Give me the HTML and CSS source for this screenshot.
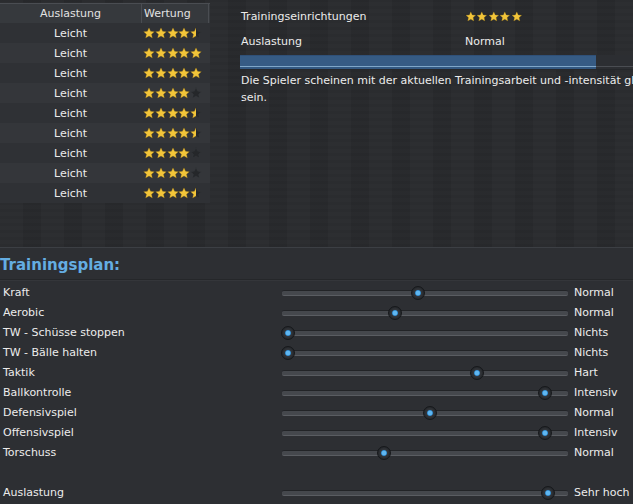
FILE: index.html
```html
<!DOCTYPE html>
<html lang="de">
<head>
    <meta charset="UTF-8">
    <title>Training</title>
    <link rel="stylesheet" href="styles.css">
</head>
<body>
    <svg class="defs" width="0" height="0">
        <defs>
            <symbol id="star" viewBox="0 0 24 24">
                <path d="M12 1.5l3.2 7 7.5.8-5.6 5.1 1.6 7.5L12 18l-6.7 3.9 1.6-7.5-5.6-5.1 7.5-.8z"/>
            </symbol>
            <clipPath id="half"><rect x="0" y="0" width="6" height="12"/></clipPath>
        </defs>
    </svg>

    <div class="top">
        <div class="ratings">
            <div class="row head">
                <div class="col-load">Auslastung</div>
                <div class="col-rate">Wertung</div>
            </div>
            <div class="row"><div class="col-load">Leicht</div><div class="col-rate" data-stars="4.5"></div></div>
            <div class="row"><div class="col-load">Leicht</div><div class="col-rate" data-stars="5"></div></div>
            <div class="row"><div class="col-load">Leicht</div><div class="col-rate" data-stars="5"></div></div>
            <div class="row"><div class="col-load">Leicht</div><div class="col-rate" data-stars="4"></div></div>
            <div class="row"><div class="col-load">Leicht</div><div class="col-rate" data-stars="4.5"></div></div>
            <div class="row"><div class="col-load">Leicht</div><div class="col-rate" data-stars="4.5"></div></div>
            <div class="row"><div class="col-load">Leicht</div><div class="col-rate" data-stars="4"></div></div>
            <div class="row"><div class="col-load">Leicht</div><div class="col-rate" data-stars="4"></div></div>
            <div class="row"><div class="col-load">Leicht</div><div class="col-rate" data-stars="4.5"></div></div>
        </div>

        <div class="info">
            <div class="info-row">
                <span class="info-label">Trainingseinrichtungen</span>
                <span class="info-value small-stars" data-stars="5"></span>
            </div>
            <div class="info-row">
                <span class="info-label">Auslastung</span>
                <span class="info-value">Normal</span>
            </div>
            <div class="progress"><div class="progress-fill" style="width: 356px"></div></div>
            <p class="message">Die Spieler scheinen mit der aktuellen Trainingsarbeit und -intensität glücklich zu sein.</p>
        </div>
    </div>

    <div class="plan">
        <h2>Trainingsplan:</h2>
        <div class="sliders">
            <div class="label">Kraft</div>
            <div class="track"><span class="thumb" style="left: 136px"></span></div>
            <div class="value">Normal</div>

            <div class="label">Aerobic</div>
            <div class="track"><span class="thumb" style="left: 113px"></span></div>
            <div class="value">Normal</div>

            <div class="label">TW - Schüsse stoppen</div>
            <div class="track"><span class="thumb" style="left: 6px"></span></div>
            <div class="value">Nichts</div>

            <div class="label">TW - Bälle halten</div>
            <div class="track"><span class="thumb" style="left: 6px"></span></div>
            <div class="value">Nichts</div>

            <div class="label">Taktik</div>
            <div class="track"><span class="thumb" style="left: 195px"></span></div>
            <div class="value">Hart</div>

            <div class="label">Ballkontrolle</div>
            <div class="track"><span class="thumb" style="left: 263px"></span></div>
            <div class="value">Intensiv</div>

            <div class="label">Defensivspiel</div>
            <div class="track"><span class="thumb" style="left: 148px"></span></div>
            <div class="value">Normal</div>

            <div class="label">Offensivspiel</div>
            <div class="track"><span class="thumb" style="left: 263px"></span></div>
            <div class="value">Intensiv</div>

            <div class="label">Torschuss</div>
            <div class="track"><span class="thumb" style="left: 102px"></span></div>
            <div class="value">Normal</div>

            <div class="spacer"></div>

            <div class="label">Auslastung</div>
            <div class="track"><span class="thumb" style="left: 266px"></span></div>
            <div class="value">Sehr hoch</div>
        </div>
    </div>

    <script>
        // fill the star ratings from data-stars
        var SVG = 'http://www.w3.org/2000/svg';
        document.querySelectorAll('[data-stars]').forEach(function(el) {
            var n = parseFloat(el.getAttribute('data-stars'));
            for (var i = 0; i < 5; i++) {
                var svg = document.createElementNS(SVG, 'svg');
                svg.setAttribute('viewBox', '0 0 12 12');
                svg.setAttribute('class', 'star');
                var empty = document.createElementNS(SVG, 'use');
                empty.setAttribute('href', '#star');
                empty.setAttribute('width', '12');
                empty.setAttribute('height', '12');
                empty.setAttribute('class', 'star-empty');
                svg.appendChild(empty);
                if (i < n) {
                    var full = document.createElementNS(SVG, 'use');
                    full.setAttribute('href', '#star');
                    full.setAttribute('width', '12');
                    full.setAttribute('height', '12');
                    full.setAttribute('class', 'star-full');
                    if (n - i < 1) full.setAttribute('clip-path', 'url(#half)');
                    svg.appendChild(full);
                }
                el.appendChild(svg);
            }
        });
    </script>
</body>
</html>
```

FILE: styles.css
```css
body {
    margin: 0;
    width: 633px;
    height: 504px;
    overflow: hidden;
    background-color: #2a2c30;
    font-family: 'DejaVu Sans', Verdana, sans-serif;
    font-size: 11px;
    color: #ececec;
}
.defs {
    position: absolute;
}

/* upper part */
.top {
    display: flex;
    height: 247px;
    background-color: #2a2c2f;
    background-image:
        repeating-linear-gradient(0deg, rgba(0, 0, 0, 0.05) 0 3px, transparent 3px 7px),
        repeating-linear-gradient(90deg, rgba(255, 255, 255, 0.01) 0 23px, rgba(0, 0, 0, 0.035) 23px 41px);
    border-bottom: 1px solid #3c3f44;
}
.ratings {
    width: 210px;
    margin-top: 3px;
    flex: none;
}
.row {
    display: flex;
    height: 20px;
    align-items: center;
    background-color: #2f3135;
}
.row:nth-child(odd) {
    background-color: #34363a;
}
.row.head {
    background-color: #36393d;
    border-top: 1px solid #4a4d52;
    height: 19px;
    color: #e2e2e2;
}
.col-load {
    width: 141px;
    text-align: center;
}
.col-rate {
    display: flex;
    align-items: center;
    height: 100%;
    padding-left: 2px;
}
.head .col-rate {
    border-left: 1px solid #4a4d52;
    border-right: 1px solid #4a4d52;
    width: 64px;
    padding-left: 2px;
}
.star {
    width: 12px;
    height: 12px;
    margin-right: -0.2px;
    display: block;
}
.star-empty {
    fill: #25272a;
    stroke: #3e4146;
    stroke-width: 0.5;
}
.star-full {
    fill: #f2c53a;
    stroke: #8a6a18;
    stroke-width: 0.6;
}

.info {
    margin-left: 30px;
    padding-top: 7px;
    width: 470px;
    flex: none;
}
.info-row {
    display: flex;
    align-items: center;
    height: 18px;
    margin-bottom: 7px;
    padding-left: 1px;
}
.info-row + .info-row {
    margin-bottom: 5px;
}
.info-label {
    width: 224px;
}
.info-value {
    display: flex;
}
.small-stars .star {
    width: 11.6px;
    height: 11px;
}
.progress {
    height: 15px;
    background-color: #2c2e32;
    background-image: linear-gradient(to bottom, transparent 11px, #4a4d52 11px 12px, transparent 12px);
    border-bottom: 1px solid #25272a;
    box-sizing: border-box;
}
.progress-fill {
    height: 14px;
    background-color: #365b84;
    border-top: 1px solid #2f5078;
    box-sizing: border-box;
    background-image: linear-gradient(to bottom, transparent 10px, #7fa6c8 10px 11px, #325780 11px);
}
.message {
    margin: 2px 0 0 1px;
    line-height: 17px;
}

/* training plan */
.plan {
    background-color: #2d2f33;
    height: 256px;
}
.plan h2 {
    margin: 0;
    height: 31px;
    line-height: 34px;
    font-size: 15px;
    font-weight: bold;
    color: #64ade2;
    border-bottom: 1px solid #25272a;
    box-shadow: 0 1px 0 #34363a;
}
.sliders {
    display: grid;
    grid-template-columns: 282px 286px auto;
    grid-auto-rows: 20px;
    align-items: center;
    padding-top: 2px;
}
.label {
    padding-left: 3px;
}
.value {
    padding-left: 6px;
}
.spacer {
    grid-column: 1 / 4;
}
.track {
    position: relative;
    height: 4px;
    border-radius: 2px;
    background-color: #45484d;
    border-top: 1px solid #222427;
    border-bottom: 1px solid #5a5d62;
    margin-top: 1px;
}
.thumb {
    position: absolute;
    top: 50%;
    width: 14px;
    height: 14px;
    margin: -7px 0 0 -7px;
    border-radius: 50%;
    box-sizing: border-box;
    border: 1px solid #16181b;
    background: radial-gradient(circle, #5fb6f0 0 2px, #2f86c8 2.6px, #33363b 3.4px, #2a2d31 5px, #1e2023 7px);
}
```
